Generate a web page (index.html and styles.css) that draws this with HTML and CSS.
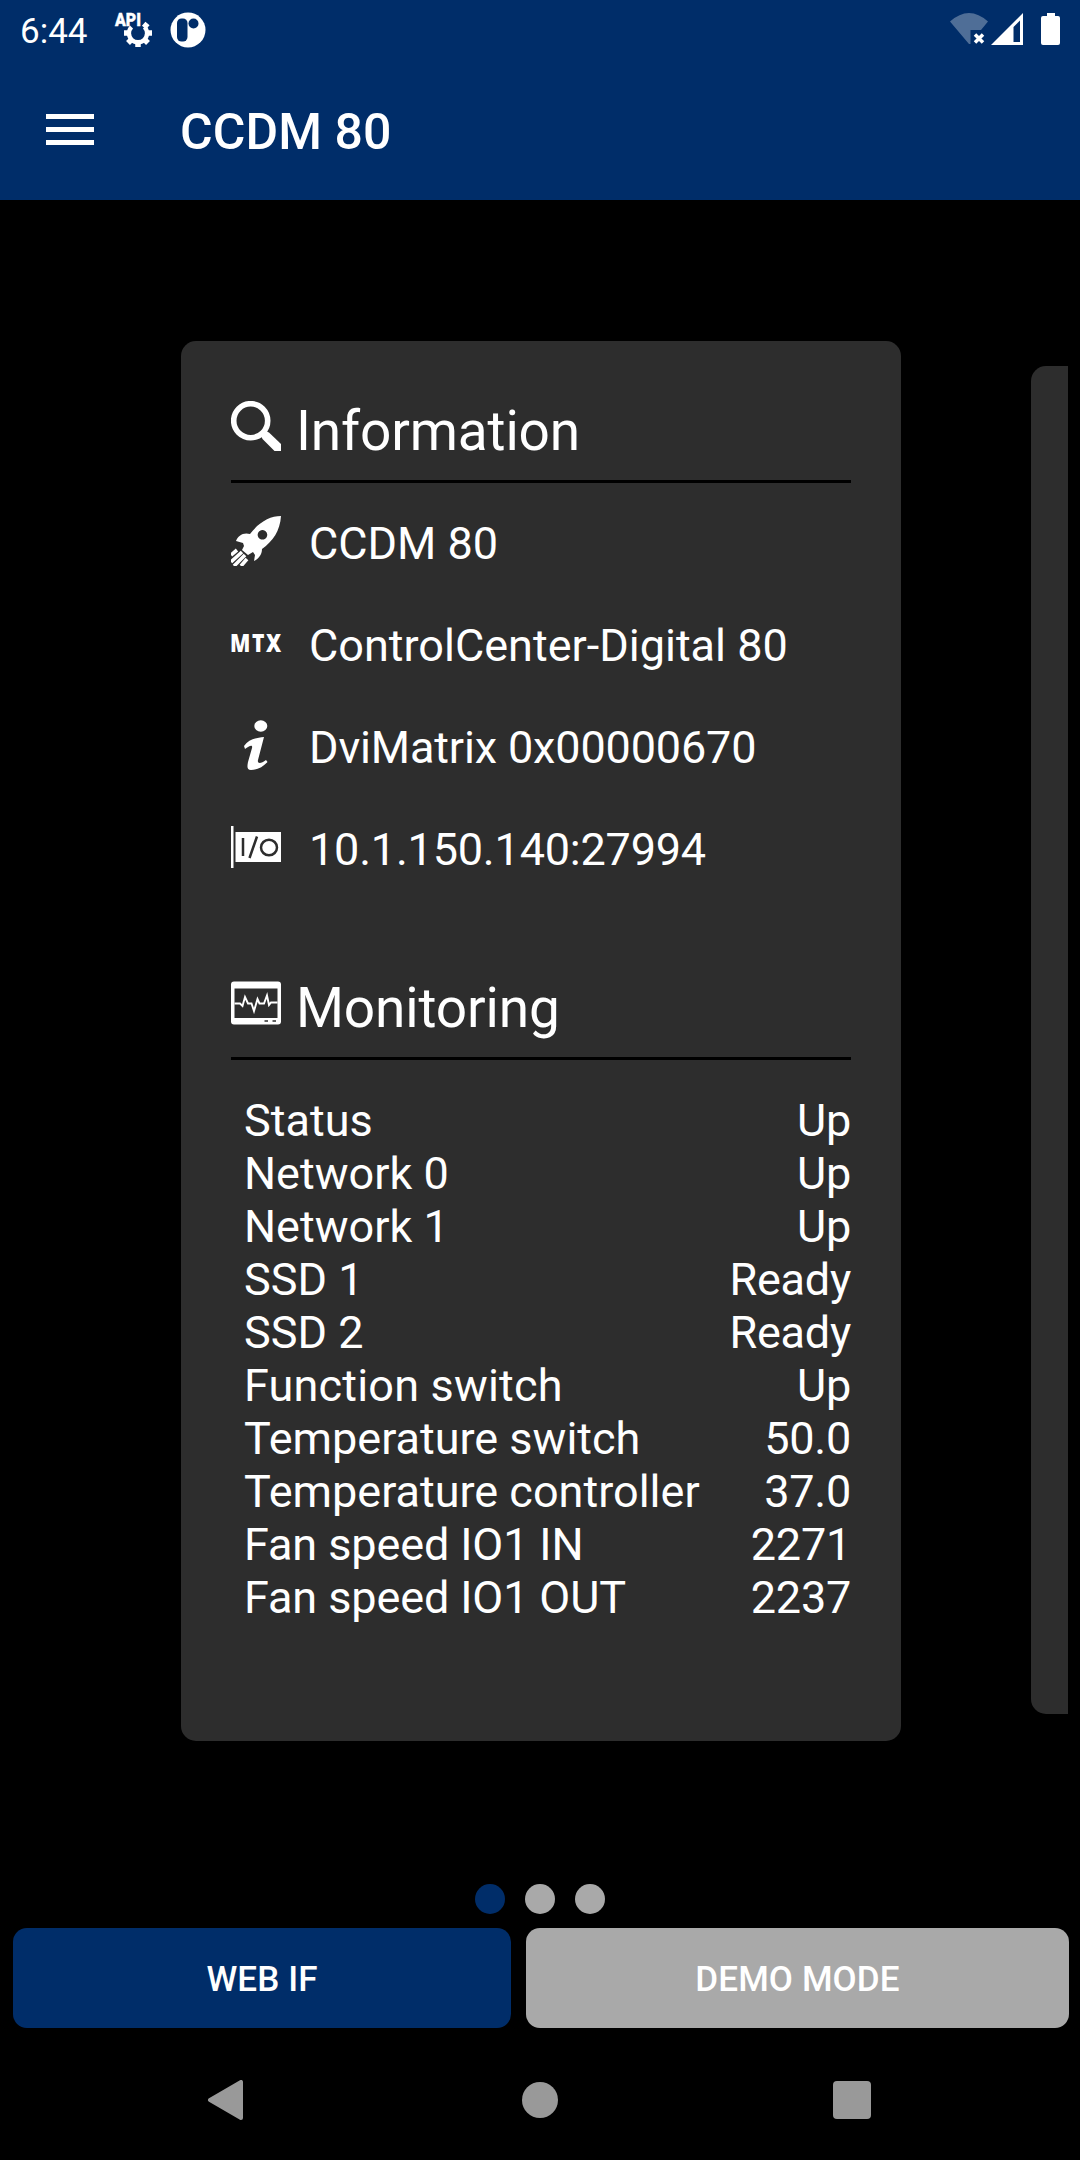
FILE: index.html
```html
<!DOCTYPE html>
<html lang="en">
<head>
<meta charset="utf-8">
<title>CCDM 80</title>
<link rel="stylesheet" href="styles.css">
</head>
<body>
<div class="screen">
  <header class="top">
    <div class="status">
      <span class="clock">6:44</span>
      <svg class="api" width="40" height="40" viewBox="0 0 40 40">
        <text x="1" y="16" textLength="26" lengthAdjust="spacingAndGlyphs">API</text>
        <path d="M17.500 17A9 9 0 1 0 30.500 17" fill="none" stroke="#fff" stroke-width="4.200"/>
        <path d="M15 23H10M33 23H38M24 32V37M17.500 29.500L14 33M30.500 29.500L34 33M30 17.500L33.500 13.500" stroke="#fff" stroke-width="5.500"/>
      </svg>
      <svg class="badge" width="36" height="36" viewBox="0 0 36 36">
        <circle cx="18" cy="18" r="17.500" fill="#fff"/>
        <rect x="7" y="6.500" width="10.500" height="23" rx="4.500" fill="#002d69"/>
        <circle cx="23.500" cy="11.500" r="5" fill="#002d69"/>
      </svg>
      <svg class="signals" width="112" height="36" viewBox="0 0 112 36">
        <path d="M0 9.500Q19 -7.500 38 9.500L31 18H20.500V32H19z" fill="#fff" fill-opacity=".31"/>
        <path d="M25 22.500l8 8m0-8l-8 8" stroke="#fff" stroke-width="3.500"/>
        <path d="M41 33L73 1V33zM63.500 15V30H70V8.500z" fill="#fff" fill-rule="evenodd"/>
        <path d="M97 1h8v3h3q2 0 2 2v25q0 2-2 2h-15q-2 0-2-2v-25q0-2 2-2h4z" fill="#fff"/>
      </svg>
    </div>
    <div class="toolbar">
      <div class="menu"><i></i><i></i><i></i></div>
      <h1>CCDM 80</h1>
    </div>
  </header>

  <main class="pager">
    <section class="card">
      <h2>
        <svg width="50" height="50" viewBox="0 0 50 50">
          <circle cx="19.700" cy="19.700" r="17" fill="none" stroke="#fff" stroke-width="5.600"/>
          <path d="M30 34.500L34.500 30 38 31.500 50 43V50H43.500L31.500 38z" fill="#fff"/>
        </svg>
        <span>Information</span>
      </h2>
      <ul class="info">
        <li>
          <svg width="50" height="50" viewBox="0 0 50 50">
            <path d="M50 0C39 0 28 6 19 18C12 16 7 20 5 25L12 27 13 30 11 34 17 39 22 36 24 39 23 45C27 43 31 39 31 33C42 25 49 15 50 0zM31.500 14A4.800 4.800 0 1 1 31.400 14z" fill="#fff" fill-rule="evenodd"/>
            <path d="M0 39L6 34M0 46L11 36M3 50L14 39M10 50L16 43" stroke="#fff" stroke-width="3.600"/>
          </svg>
          <span>CCDM 80</span>
        </li>
        <li>
          <svg class="mtx" width="50" height="50" viewBox="0 0 50 50"><text x="-1" y="34" textLength="53" lengthAdjust="spacingAndGlyphs">MTX</text></svg>
          <span>ControlCenter-Digital 80</span>
        </li>
        <li>
          <svg width="50" height="50" viewBox="0 0 50 50">
            <ellipse cx="29.800" cy="6" rx="6.500" ry="5.800" fill="#fff"/>
            <path d="M13 26C18 19 25 18 33 17L27 40C26 44 30 44 35 40L36.500 42C32 47 26 50 20 50C16 50 16 47 17 42L21 28C22 24 18 26 14 29z" fill="#fff"/>
          </svg>
          <span class="serial">DviMatrix 0x00000670</span>
        </li>
        <li>
          <svg width="50" height="50" viewBox="0 0 50 50">
            <path d="M0 4h2.500v42H0z" fill="#fff"/>
            <path d="M4.500 10H50V40H4.500z" fill="#fff"/>
            <g fill="none" stroke="#2d2d2d" stroke-width="2.500"><path d="M12 16V34M26 14.500L18.500 36"/><ellipse cx="38" cy="25.500" rx="8" ry="7.800"/></g>
          </svg>
          <span class="address">10.1.150.140:27994</span>
        </li>
      </ul>
      <h2>
        <svg width="50" height="50" viewBox="0 0 50 50">
          <path d="M3 3.500H47Q50 3.500 50 6.500V43.500Q50 46.500 47 46.500H3Q0 46.500 0 43.500V6.500Q0 3.500 3 3.500zM3.500 10.500V40H46.500V10.500z" fill="#fff" fill-rule="evenodd"/>
          <path d="M3.500 25.500H9L11.500 28 14 19 17 25.500H20.500L23 33 26.500 21 28.500 25.500H33L36 17.500 38 27 40 24.500H46.500" fill="none" stroke="#fff" stroke-width="1.900"/>
          <path d="M33.500 43h3.500M41.500 43H45" stroke="#2d2d2d" stroke-width="1.700"/>
        </svg>
        <span>Monitoring</span>
      </h2>
      <dl class="stats">
        <div><dt>Status</dt><dd>Up</dd></div>
        <div><dt>Network 0</dt><dd>Up</dd></div>
        <div><dt>Network 1</dt><dd>Up</dd></div>
        <div><dt>SSD 1</dt><dd>Ready</dd></div>
        <div><dt>SSD 2</dt><dd>Ready</dd></div>
        <div><dt class="wide">Function switch</dt><dd>Up</dd></div>
        <div><dt>Temperature switch</dt><dd>50.0</dd></div>
        <div><dt>Temperature controller</dt><dd>37.0</dd></div>
        <div><dt class="tight">Fan speed IO1 IN</dt><dd>2271</dd></div>
        <div><dt class="tight">Fan speed IO1 OUT</dt><dd>2237</dd></div>
      </dl>
    </section>
    <section class="next"></section>
  </main>

  <div class="dots"><i class="on"></i><i></i><i></i></div>
  <div class="actions">
    <button class="primary">WEB IF</button>
    <button class="secondary">DEMO MODE</button>
  </div>
  <nav class="nav">
    <svg width="40" height="40" viewBox="0 0 40 40"><path d="M35 2V38L4 20z" fill="#999" stroke="#999" stroke-width="4" stroke-linejoin="round"/></svg>
    <svg width="40" height="40" viewBox="0 0 40 40"><circle cx="21" cy="20" r="18" fill="#999"/></svg>
    <svg width="40" height="40" viewBox="0 0 40 40"><rect x="1" y="1" width="38" height="38" rx="4" fill="#999"/></svg>
  </nav>
</div>
</body>
</html>
```
FILE: styles.css
```css
* { box-sizing: border-box; margin: 0; padding: 0; }
body { background: #000; color: #fff; font-family: Roboto, sans-serif; }
svg { display: block; flex: none; }
.screen { width: 1080px; height: 2160px; display: flex; flex-direction: column; overflow: hidden; }

.top { height: 200px; background: #002d69; flex: none; }
.status { height: 60px; display: flex; align-items: flex-start; padding: 12px 18px 0 20px; }
.clock { width: 94px; font-size: 35px; line-height: 39px; }
.api text { font: 900 18px Roboto, sans-serif; fill: #fff; stroke: #fff; stroke-width: 0.4px; }
.badge { margin-left: 16px; }
.signals { margin-left: auto; }
.api { margin-top: -2px; }
.toolbar { height: 140px; display: flex; align-items: flex-start; padding: 42px 0 0 46px; }
.menu { width: 134px; padding-top: 12px; display: flex; flex-direction: column; gap: 8px; }
.menu i { width: 48px; height: 5px; background: #fff; }
h1 { font-size: 50px; font-weight: 500; line-height: 60px; letter-spacing: 0.1px; }

.pager { height: 1684px; flex: none; padding: 141px 12px 0 181px; display: flex; justify-content: space-between; align-items: flex-start; }
.card { width: 720px; height: 1400px; padding: 60px 50px 0; background: #2d2d2d; border-radius: 15px; }
h2 { height: 82px; display: flex; gap: 15px; border-bottom: 3px solid #000; font-size: 55px; font-weight: 400; line-height: 60px; letter-spacing: -0.15px; }
.info { height: 495px; padding-top: 10px; list-style: none; font-size: 45px; }
.info li { height: 102px; display: flex; gap: 28px; padding-top: 23px; }
.info span { line-height: 56px; }
.info .serial { letter-spacing: -0.15px; }
.info .address { letter-spacing: -0.2px; }
.mtx { overflow: visible; }
.mtx text { font: 800 25px "Open Sans", sans-serif; letter-spacing: 2px; fill: #fff; }
.stats { padding: 34px 0 0 13px; font-size: 45px; line-height: 53px; }
.stats div { display: flex; justify-content: space-between; }
.stats .wide { letter-spacing: 0.18px; }
.stats .tight { letter-spacing: -0.12px; }
.stats dd { letter-spacing: -0.25px; }
.next { width: 37px; height: 1348px; margin-top: 25px; background: #2d2d2d; border-radius: 15px 0 0 15px; }

.dots { height: 44px; display: flex; justify-content: center; gap: 20px; flex: none; }
.dots i { width: 30px; height: 30px; border-radius: 50%; background: #a9a9a9; }
.dots .on { background: #002d69; }
.actions { height: 100px; display: flex; gap: 15px; padding: 0 11px 0 13px; flex: none; }
.actions button { padding-top: 2px; border: 0; border-radius: 14px; color: #fff; font: 500 35px Roboto, sans-serif; letter-spacing: 0.1px; }
.actions .primary { width: 498px; background: #002d69; }
.actions .secondary { flex: 1; background: #a9a9a9; }
.nav { padding: 52px 208px 0 206px; display: flex; justify-content: space-between; }
```
